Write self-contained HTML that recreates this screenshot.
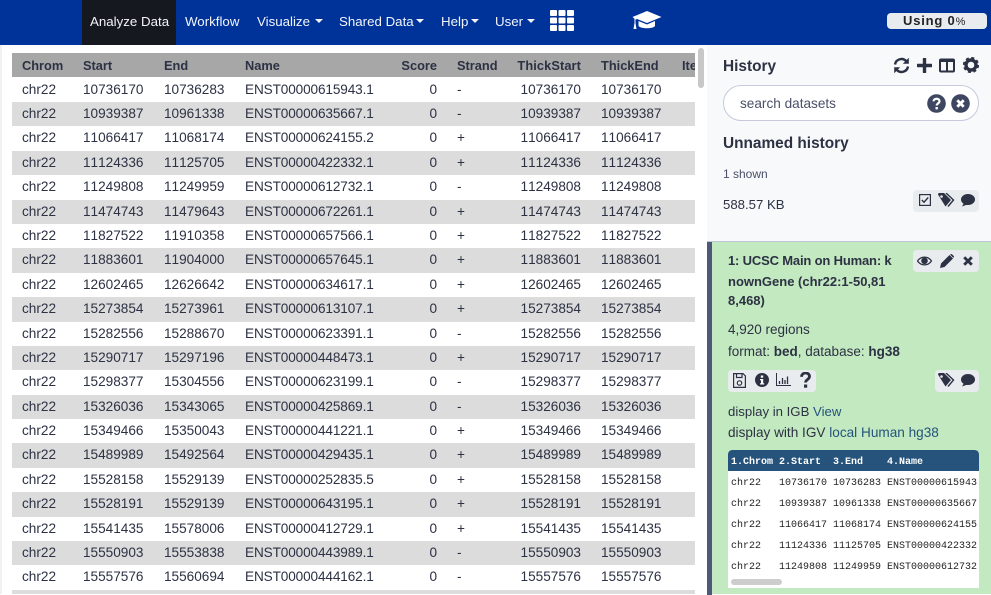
<!DOCTYPE html>
<html><head><meta charset="utf-8"><title>Galaxy</title>
<style>
html,body{margin:0;padding:0;width:991px;height:594px;overflow:hidden;background:#fff;font-family:"Liberation Sans",sans-serif;font-size:13.6px;color:#2c3143}
div,span,svg{position:absolute}
#nav{left:0;top:0;width:991px;height:45px;background:#003399}
.n{top:14px;color:#f2f4fa;font-size:13.3px;line-height:15px;white-space:nowrap}
.c{top:19px;width:0;height:0;border-left:4px solid transparent;border-right:4px solid transparent;border-top:4px solid #f2f4fa}
#tb{left:12px;top:53px;width:683px;height:541px;overflow:hidden;font-kerning:none}
.r{position:relative;height:24.4px;line-height:24.9px;width:683px;white-space:nowrap}
.r.h{height:24px;line-height:25px;background:#a7a7a7;font-weight:bold;font-size:12.8px}
.r span{top:0}
.r span:nth-child(1){left:10px}
.r span:nth-child(2){left:71px}
.r span:nth-child(3){left:152px}
.r span:nth-child(4){left:233px;letter-spacing:-.12px}
.r span:nth-child(5){right:258px}
.r span:nth-child(6){left:445px}
.r span:nth-child(7){right:114px}
.r span:nth-child(8){left:589px}
.r span:nth-child(9){left:670px}
.r.h span:nth-child(4){letter-spacing:0}
.r.h span:nth-child(7){letter-spacing:.1px}
#side{left:707px;top:45px;width:284px;height:196px;background:#f8f9fb}
#ds{left:707px;top:241px;width:284px;height:353px;background:#c3e9c0;border-top:1px solid #bfc5d8;box-sizing:border-box}
#ds .bar{left:0;top:0;width:5px;height:353px;background:#4f5878}
.t{white-space:nowrap;line-height:16px}
.g{background:#e9ecef;border-radius:4px}
#peek{left:728px;top:450px;width:251px;height:138px;background:#fff;overflow:hidden;border-radius:4px 4px 0 0}
#peek .hd{left:0;top:0;width:251px;height:21px;background:#25537b;border-radius:4px 4px 0 0}
.m{font-family:"Liberation Mono",monospace;font-size:10px;line-height:12px;white-space:pre;color:#222}
.mh{font-family:"Liberation Mono",monospace;font-size:10px;line-height:12px;white-space:pre;color:#fff;font-weight:bold}
a{color:#25537b;text-decoration:none}
</style></head><body>
<div id="nav">
<div style="left:82px;top:0;width:94px;height:45px;background:#16181f"></div>
<span class="n" style="left:90px">Analyze Data</span>
<span class="n" style="left:185px">Workflow</span>
<span class="n" style="left:257px">Visualize</span><span class="c" style="left:315px"></span>
<span class="n" style="left:339px">Shared Data</span><span class="c" style="left:416px"></span>
<span class="n" style="left:441px">Help</span><span class="c" style="left:471px"></span>
<span class="n" style="left:495px">User</span><span class="c" style="left:527px"></span>
<svg style="left:550px;top:10px" width="24" height="21" viewBox="0 0 24 21" fill="#fff"><rect width="7" height="6" rx="1"/><rect x="8.5" width="7" height="6" rx="1"/><rect x="17" width="7" height="6" rx="1"/><rect y="7.5" width="7" height="6" rx="1"/><rect x="8.5" y="7.5" width="7" height="6" rx="1"/><rect x="17" y="7.5" width="7" height="6" rx="1"/><rect y="15" width="7" height="6" rx="1"/><rect x="8.5" y="15" width="7" height="6" rx="1"/><rect x="17" y="15" width="7" height="6" rx="1"/></svg>
<svg style="left:632px;top:11px" width="30" height="19" viewBox="0 0 30 19" fill="#fff"><path d="M15 0L29.500 6 15 12 5 8 3.500 8.500V12L4.500 18H1.500L2.500 12V7.800L.5 6Z"/><path d="M6.500 10L15 13.500 23 10V15C21 18 9 18 6.500 15Z"/></svg>
<div style="left:887px;top:13px;width:100px;height:16px;background:#e9ecef;border-radius:4px"></div>
<span style="left:903px;top:13px;font-size:13px;font-weight:bold;line-height:16px;letter-spacing:.8px;color:#222;white-space:nowrap">Using 0<span style="position:static;font-weight:normal;font-size:11px">%</span></span>
</div>
<div style="left:0;top:45px;width:2px;height:549px;background:#f0f1f3"></div>
<div id="tb">
<div class="r h"><span>Chrom</span><span>Start</span><span>End</span><span>Name</span><span>Score</span><span>Strand</span><span>ThickStart</span><span>ThickEnd</span><span>Ite</span></div>
<div class="r" style="background:#fff;height:25px;line-height:25.6px"><span>chr22</span><span>10736170</span><span>10736283</span><span>ENST00000615943.1</span><span>0</span><span>-</span><span>10736170</span><span>10736170</span></div>
<div class="r" style="background:#dcdcdc"><span>chr22</span><span>10939387</span><span>10961338</span><span>ENST00000635667.1</span><span>0</span><span>-</span><span>10939387</span><span>10939387</span></div>
<div class="r" style="background:#fff"><span>chr22</span><span>11066417</span><span>11068174</span><span>ENST00000624155.2</span><span>0</span><span>+</span><span>11066417</span><span>11066417</span></div>
<div class="r" style="background:#dcdcdc"><span>chr22</span><span>11124336</span><span>11125705</span><span>ENST00000422332.1</span><span>0</span><span>+</span><span>11124336</span><span>11124336</span></div>
<div class="r" style="background:#fff"><span>chr22</span><span>11249808</span><span>11249959</span><span>ENST00000612732.1</span><span>0</span><span>-</span><span>11249808</span><span>11249808</span></div>
<div class="r" style="background:#dcdcdc"><span>chr22</span><span>11474743</span><span>11479643</span><span>ENST00000672261.1</span><span>0</span><span>+</span><span>11474743</span><span>11474743</span></div>
<div class="r" style="background:#fff"><span>chr22</span><span>11827522</span><span>11910358</span><span>ENST00000657566.1</span><span>0</span><span>+</span><span>11827522</span><span>11827522</span></div>
<div class="r" style="background:#dcdcdc"><span>chr22</span><span>11883601</span><span>11904000</span><span>ENST00000657645.1</span><span>0</span><span>+</span><span>11883601</span><span>11883601</span></div>
<div class="r" style="background:#fff"><span>chr22</span><span>12602465</span><span>12626642</span><span>ENST00000634617.1</span><span>0</span><span>+</span><span>12602465</span><span>12602465</span></div>
<div class="r" style="background:#dcdcdc"><span>chr22</span><span>15273854</span><span>15273961</span><span>ENST00000613107.1</span><span>0</span><span>+</span><span>15273854</span><span>15273854</span></div>
<div class="r" style="background:#fff"><span>chr22</span><span>15282556</span><span>15288670</span><span>ENST00000623391.1</span><span>0</span><span>-</span><span>15282556</span><span>15282556</span></div>
<div class="r" style="background:#dcdcdc"><span>chr22</span><span>15290717</span><span>15297196</span><span>ENST00000448473.1</span><span>0</span><span>+</span><span>15290717</span><span>15290717</span></div>
<div class="r" style="background:#fff"><span>chr22</span><span>15298377</span><span>15304556</span><span>ENST00000623199.1</span><span>0</span><span>-</span><span>15298377</span><span>15298377</span></div>
<div class="r" style="background:#dcdcdc"><span>chr22</span><span>15326036</span><span>15343065</span><span>ENST00000425869.1</span><span>0</span><span>-</span><span>15326036</span><span>15326036</span></div>
<div class="r" style="background:#fff"><span>chr22</span><span>15349466</span><span>15350043</span><span>ENST00000441221.1</span><span>0</span><span>+</span><span>15349466</span><span>15349466</span></div>
<div class="r" style="background:#dcdcdc"><span>chr22</span><span>15489989</span><span>15492564</span><span>ENST00000429435.1</span><span>0</span><span>+</span><span>15489989</span><span>15489989</span></div>
<div class="r" style="background:#fff"><span>chr22</span><span>15528158</span><span>15529139</span><span>ENST00000252835.5</span><span>0</span><span>+</span><span>15528158</span><span>15528158</span></div>
<div class="r" style="background:#dcdcdc"><span>chr22</span><span>15528191</span><span>15529139</span><span>ENST00000643195.1</span><span>0</span><span>+</span><span>15528191</span><span>15528191</span></div>
<div class="r" style="background:#fff"><span>chr22</span><span>15541435</span><span>15578006</span><span>ENST00000412729.1</span><span>0</span><span>+</span><span>15541435</span><span>15541435</span></div>
<div class="r" style="background:#dcdcdc"><span>chr22</span><span>15550903</span><span>15553838</span><span>ENST00000443989.1</span><span>0</span><span>-</span><span>15550903</span><span>15550903</span></div>
<div class="r" style="background:#fff"><span>chr22</span><span>15557576</span><span>15560694</span><span>ENST00000444162.1</span><span>0</span><span>-</span><span>15557576</span><span>15557576</span></div>
<div class="r" style="background:#dcdcdc"></div>
</div>
<div style="left:698px;top:48px;width:6px;height:40px;background:#c8c8c8;border-radius:3px"></div>

<div id="side"></div>
<span class="t" style="left:723px;top:59px;font-size:15.4px;font-weight:bold">History</span>
<svg style="left:893px;top:57px" width="17" height="17" viewBox="0 0 17 17" fill="none" stroke="#2c3143" stroke-width="2.400"><path d="M2 7.500A6.500 6.500 0 0 1 13.500 4.500"/><path d="M15 9.500A6.500 6.500 0 0 1 3.500 12.500"/><path d="M15.800.8V6.800H9.800Z" fill="#2c3143" stroke="none"/><path d="M1.200 16.200V10.200H7.200Z" fill="#2c3143" stroke="none"/></svg>
<svg style="left:917px;top:58px" width="15" height="15" viewBox="0 0 15 15" fill="#2c3143"><rect x="5.800" y="0" width="3.400" height="15" rx=".6"/><rect x="0" y="5.800" width="15" height="3.400" rx=".6"/></svg>
<svg style="left:939px;top:58px" width="16" height="15" viewBox="0 0 16 15" fill="none" stroke="#2c3143" stroke-width="2"><rect x="1" y="1.500" width="14" height="12" rx="1"/><path d="M8 1.500V13.500M1 3H15" /></svg>
<svg style="left:963px;top:57px" width="16" height="16" viewBox="0 0 16 16"><circle cx="8" cy="8" r="5" fill="none" stroke="#2c3143" stroke-width="3.400"/><circle cx="8" cy="8" r="7" fill="none" stroke="#2c3143" stroke-width="2.200" stroke-dasharray="3 2.500"/></svg>
<div style="left:723px;top:85px;width:256px;height:36px;box-sizing:border-box;background:#fff;border:1px solid #c6c9de;border-radius:18px"></div>
<span class="t" style="left:740px;top:96px;color:#4a5068">search datasets</span>
<svg style="left:927px;top:94px" width="19" height="19" viewBox="0 0 19 19"><circle cx="9.500" cy="9.500" r="9.300" fill="#3f4661"/><path d="M6.500 7.300C6.800 3.800 12.500 4 12.500 7.300C12.500 9.300 9.700 9.500 9.700 11.500" fill="none" stroke="#fff" stroke-width="2.200"/><rect x="8.500" y="13" width="2.400" height="2.400" fill="#fff"/></svg>
<svg style="left:951px;top:94px" width="19" height="19" viewBox="0 0 19 19"><circle cx="9.500" cy="9.500" r="9.300" fill="#3f4661"/><path d="M6.300 6.300L12.700 12.700M12.700 6.300L6.300 12.700" stroke="#fff" stroke-width="2.800"/></svg>
<span class="t" style="left:723px;top:136px;font-size:15.4px;font-weight:bold">Unnamed history</span>
<span class="t" style="left:723px;top:166px;font-size:12px;color:#4a5068">1 shown</span>
<span class="t" style="left:723px;top:197px;font-size:13.2px">588.57 KB</span>
<div class="g" style="left:913px;top:190px;width:66px;height:22px"></div>
<svg style="left:919px;top:194px" width="12" height="12" viewBox="0 0 12 12" fill="none" stroke="#2c3143" stroke-width="1.200"><rect x=".6" y=".6" width="10.800" height="10.800"/><path d="M2.800 6L5 8.200L9.200 3.500" stroke-width="1.400"/></svg>
<svg style="left:938px;top:193px" width="17" height="14" viewBox="0 0 17 14"><path d="M0 1.500Q0 0 1.500 0H6L13 7L7.500 13.500Z" fill="#2c3143"/><path d="M8 0L15.500 7L10 13.500" fill="none" stroke="#2c3143" stroke-width="1.400"/><circle cx="3.500" cy="3.500" r="1.300" fill="#e9ecef"/></svg>
<svg style="left:961px;top:194px" width="14" height="13" viewBox="0 0 14 13" fill="#2c3143"><ellipse cx="7" cy="5.500" rx="7" ry="5.500"/><path d="M3 9L1 12.500L6.500 10.500Z"/></svg>

<div id="ds"><div class="bar"></div></div>
<div class="g" style="left:913px;top:250px;width:66px;height:22px"></div>
<svg style="left:917px;top:255px" width="15" height="12" viewBox="0 0 15 12"><path d="M.5 6C4 .8 11 .8 14.500 6C11 11.200 4 11.200 .5 6Z" fill="none" stroke="#2c3143" stroke-width="1.300"/><circle cx="7.500" cy="5.800" r="3.300" fill="#2c3143"/></svg>
<svg style="left:940px;top:254px" width="14" height="14" viewBox="0 0 14 14" fill="#2c3143"><path d="M0 14L1 9.500L9.500 1L13 4.500L4.500 13Z"/><path d="M10.500 0Q11.200-.3 12 .3L13.700 2Q14.300 2.800 13.800 3.500L13 3.500L10.500 1Z"/></svg>
<svg style="left:963px;top:256px" width="10" height="10" viewBox="0 0 10 10"><path d="M1.200 1.200L8.800 8.800M8.800 1.200L1.200 8.800" stroke="#2c3143" stroke-width="2.800"/></svg>
<span class="t" style="left:728px;top:253px;font-weight:bold;font-size:13px;letter-spacing:-.17px">1: UCSC Main on Human: k</span>
<span class="t" style="left:728px;top:274px;font-weight:bold;font-size:13px">nownGene (chr22:1-50,81</span>
<span class="t" style="left:728px;top:293px;font-weight:bold;font-size:13px">8,468)</span>
<span class="t" style="left:728px;top:322px;font-size:13.5px">4,920 regions</span>
<span class="t" style="left:728px;top:344px;font-size:13.5px">format: <b>bed</b>, database: <b>hg38</b></span>
<div class="g" style="left:728px;top:370px;width:88px;height:22px"></div>
<svg style="left:733px;top:373px" width="13" height="15" viewBox="0 0 13 15" fill="none" stroke="#2c3143" stroke-width="1.200"><path d="M.6.6H10L12.400 3V14.400H.6Z"/><path d="M3.500.6V4.500H9V.6"/><circle cx="6.500" cy="10" r="2.200"/></svg>
<svg style="left:755px;top:373px" width="14" height="14" viewBox="0 0 14 14"><circle cx="7" cy="7" r="7" fill="#2c3143"/><rect x="5.800" y="2.500" width="2.400" height="2.200" fill="#fff"/><path d="M5 6H8.200V10.300H9.200V11.500H5V10.300H6V7.200H5Z" fill="#fff"/></svg>
<svg style="left:776px;top:373px" width="15" height="13" viewBox="0 0 15 13" fill="none" stroke="#2c3143"><path d="M.5 0V12.500H15" stroke-width="1"/><path d="M3.500 11V8M6.500 11V5M9 11V7M11.500 11V3.500" stroke-width="1.300"/></svg>
<svg style="left:800px;top:372px" width="11" height="16" viewBox="0 0 11 16"><path d="M1.500 4.800C1.800-.2 9.500-.2 9.500 4.500C9.500 7.500 5.600 7.500 5.600 10.500" fill="none" stroke="#2c3143" stroke-width="2.800"/><rect x="4" y="12.500" width="3.200" height="3.200" fill="#2c3143"/></svg>
<div class="g" style="left:935px;top:370px;width:44px;height:22px"></div>
<svg style="left:938px;top:373px" width="17" height="14" viewBox="0 0 17 14"><path d="M0 1.500Q0 0 1.500 0H6L13 7L7.500 13.500Z" fill="#2c3143"/><path d="M8 0L15.500 7L10 13.500" fill="none" stroke="#2c3143" stroke-width="1.400"/><circle cx="3.500" cy="3.500" r="1.300" fill="#e9ecef"/></svg>
<svg style="left:961px;top:374px" width="14" height="13" viewBox="0 0 14 13" fill="#2c3143"><ellipse cx="7" cy="5.500" rx="7" ry="5.500"/><path d="M3 9L1 12.500L6.500 10.500Z"/></svg>
<span class="t" style="left:728px;top:404px;font-size:13.2px">display in IGB <a>View</a></span>
<span class="t" style="left:728px;top:425px;font-size:13.6px">display with IGV <a>local</a> <a>Human hg38</a></span>

<div id="peek">
<div class="hd"></div>
<span class="mh" style="left:3px;top:7px">1.Chrom</span><span class="mh" style="left:51px;top:7px">2.Start</span><span class="mh" style="left:105px;top:7px">3.End</span><span class="mh" style="left:159px;top:7px">4.Name</span>
<span class="m" style="left:3px;top:28px">chr22</span><span class="m" style="left:51px;top:28px">10736170</span><span class="m" style="left:105px;top:28px">10736283</span><span class="m" style="left:159px;top:28px">ENST00000615943</span>
<span class="m" style="left:3px;top:49px">chr22</span><span class="m" style="left:51px;top:49px">10939387</span><span class="m" style="left:105px;top:49px">10961338</span><span class="m" style="left:159px;top:49px">ENST00000635667</span>
<span class="m" style="left:3px;top:70px">chr22</span><span class="m" style="left:51px;top:70px">11066417</span><span class="m" style="left:105px;top:70px">11068174</span><span class="m" style="left:159px;top:70px">ENST00000624155</span>
<span class="m" style="left:3px;top:91px">chr22</span><span class="m" style="left:51px;top:91px">11124336</span><span class="m" style="left:105px;top:91px">11125705</span><span class="m" style="left:159px;top:91px">ENST00000422332</span>
<span class="m" style="left:3px;top:112px">chr22</span><span class="m" style="left:51px;top:112px">11249808</span><span class="m" style="left:105px;top:112px">11249959</span><span class="m" style="left:159px;top:112px">ENST00000612732</span>
<div style="left:3px;top:129px;width:51px;height:6px;background:#cdcdcd;border-radius:3px"></div>
</div>
</body></html>
